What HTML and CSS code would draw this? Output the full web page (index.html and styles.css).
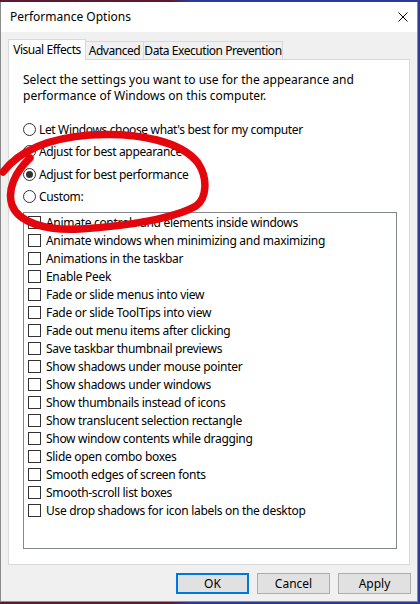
FILE: index.html
```html
<!DOCTYPE html>
<html>
<head>
<meta charset="utf-8">
<title>Performance Options</title>
<link rel="stylesheet" href="styles.css">
</head>
<body>
<div class="window">
  <div class="titlebar">
    <span class="title">Performance Options</span>
    <svg class="close" width="10" height="10" viewBox="0 0 10 10"><path d="M0.5 0.5L9.5 9.5M9.5 0.5L0.5 9.5" stroke="#000" stroke-width="1" fill="none"/></svg>
  </div>
  <div class="content">
    <div class="tabs">
      <div class="tab tab-active tab-ve">Visual Effects</div>
      <div class="tab tab-adv">Advanced</div>
      <div class="tab tab-dep">Data Execution Prevention</div>
    </div>
    <div class="panel">
      <p class="desc">Select the settings you want to use for the appearance and<br>performance of Windows on this computer.</p>
      <div class="radios">
        <div class="radio-row"><span class="radio"></span><span>Let Windows choose what's best for my computer</span></div>
        <div class="radio-row"><span class="radio"></span><span>Adjust for best appearance</span></div>
        <div class="radio-row"><span class="radio checked"></span><span>Adjust for best performance</span></div>
        <div class="radio-row"><span class="radio"></span><span>Custom:</span></div>
      </div>
      <div class="list">
        <div class="item"><span class="check"></span><span>Animate controls and elements inside windows</span></div>
        <div class="item"><span class="check"></span><span>Animate windows when minimizing and maximizing</span></div>
        <div class="item"><span class="check"></span><span>Animations in the taskbar</span></div>
        <div class="item"><span class="check"></span><span>Enable Peek</span></div>
        <div class="item"><span class="check"></span><span>Fade or slide menus into view</span></div>
        <div class="item"><span class="check"></span><span>Fade or slide ToolTips into view</span></div>
        <div class="item"><span class="check"></span><span>Fade out menu items after clicking</span></div>
        <div class="item"><span class="check"></span><span>Save taskbar thumbnail previews</span></div>
        <div class="item"><span class="check"></span><span>Show shadows under mouse pointer</span></div>
        <div class="item"><span class="check"></span><span>Show shadows under windows</span></div>
        <div class="item"><span class="check"></span><span>Show thumbnails instead of icons</span></div>
        <div class="item"><span class="check"></span><span>Show translucent selection rectangle</span></div>
        <div class="item"><span class="check"></span><span>Show window contents while dragging</span></div>
        <div class="item"><span class="check"></span><span>Slide open combo boxes</span></div>
        <div class="item"><span class="check"></span><span>Smooth edges of screen fonts</span></div>
        <div class="item"><span class="check"></span><span>Smooth-scroll list boxes</span></div>
        <div class="item"><span class="check"></span><span>Use drop shadows for icon labels on the desktop</span></div>
      </div>
    </div>
    <div class="buttons">
      <div class="btn btn-default">OK</div>
      <div class="btn">Cancel</div>
      <div class="btn">Apply</div>
    </div>
  </div>
</div>
<svg class="annotation" width="420" height="604" viewBox="0 0 420 604">
  <path d="M3 172 C20 150, 50 138, 90 135 C140 132, 182 142, 198 163 C208 178, 207 198, 196 206 C175 218, 130 226, 80 229 C45 231, 18 222, 12 205 C7 190, 15 172, 30 158" fill="none" stroke="#e3060c" stroke-width="7.5" stroke-linecap="round" stroke-linejoin="round"/>
</svg>
</body>
</html>
```

FILE: styles.css
```css
html, body {
  margin: 0;
  padding: 0;
}
body {
  width: 420px;
  height: 604px;
  overflow: hidden;
  position: relative;
  background: linear-gradient(90deg, #5a1a30 0, #5a1a30 170px, #2c3a98 190px, #2c3a98 100%);
  font-family: "Noto Sans", "Open Sans", sans-serif;
  font-size: 12px;
  color: #000;
  letter-spacing: -0.25px;
}
.window {
  margin-top: 2px;
  width: 418px;
  height: 600px;
  box-sizing: border-box;
  background: #f0f0f0;
  border: 1px solid #8c8c8c;
  border-top: 0;
  display: flex;
  flex-direction: column;
}
.titlebar {
  height: 30px;
  background: #fff;
  display: flex;
  align-items: center;
  justify-content: space-between;
  padding: 0 9px 0 9px;
  flex: none;
}
.title {
  font-size: 12px;
  line-height: 16px;
  letter-spacing: 0;
}
.close {
  display: block;
}
.content {
  padding: 7px 7px 0 7px;
  display: flex;
  flex-direction: column;
}
.tabs {
  display: flex;
  align-items: flex-end;
  height: 20px;
  position: relative;
  z-index: 1;
  letter-spacing: -0.45px;
}
.tab {
  height: 18px;
  box-sizing: border-box;
  border: 1px solid #d9d9d9;
  border-bottom: 0;
  background: #f0f0f0;
  line-height: 17px;
  text-align: center;
  white-space: nowrap;
}
.tab + .tab {
  border-left: 0;
}
.tab-active {
  height: 21px;
  margin-bottom: -1px;
  background: #fff;
  line-height: 19px;
  border-right: 1px solid #d9d9d9;
}
.tab-ve { width: 78px; }
.tab-adv { width: 58px; }
.tab-dep { width: 139px; }
.panel {
  height: 506px;
  box-sizing: border-box;
  background: #fff;
  border: 1px solid #d9d9d9;
  padding: 12px 12px 0 14px;
}
.desc {
  margin: 0;
  line-height: 16px;
  letter-spacing: 0;
}
.radios {
  margin-top: 14px;
  display: flex;
  flex-direction: column;
}
.radio-row {
  height: 22.5px;
  display: flex;
  align-items: center;
  gap: 3px;
  white-space: nowrap;
  letter-spacing: -0.35px;
}
.radio {
  width: 13px;
  height: 13px;
  box-sizing: border-box;
  border: 1px solid #333;
  border-radius: 50%;
  background: #fff;
  display: flex;
  align-items: center;
  justify-content: center;
  flex: none;
}
.radio.checked::after {
  content: "";
  width: 7px;
  height: 7px;
  border-radius: 50%;
  background: #333;
}
.list {
  margin-top: 4px;
  width: 374px;
  height: 337px;
  box-sizing: border-box;
  border: 1px solid #828790;
  background: #fff;
}
.item {
  height: 18px;
  display: flex;
  align-items: center;
  gap: 5px;
  padding-left: 4px;
  white-space: nowrap;
  letter-spacing: -0.3px;
}
.check {
  width: 13px;
  height: 13px;
  box-sizing: border-box;
  border: 1px solid #333;
  background: #fff;
  flex: none;
}
.buttons {
  margin-top: 8px;
  margin-right: -1px;
  display: flex;
  justify-content: flex-end;
  gap: 8px;
  letter-spacing: 0;
}
.btn {
  width: 73px;
  height: 21px;
  box-sizing: border-box;
  border: 1px solid #adadad;
  background: #e1e1e1;
  text-align: center;
  line-height: 19px;
}
.btn-default {
  border: 2px solid #0078d7;
  line-height: 17px;
}
.annotation {
  position: absolute;
  left: 0;
  top: 0;
  pointer-events: none;
}
```
